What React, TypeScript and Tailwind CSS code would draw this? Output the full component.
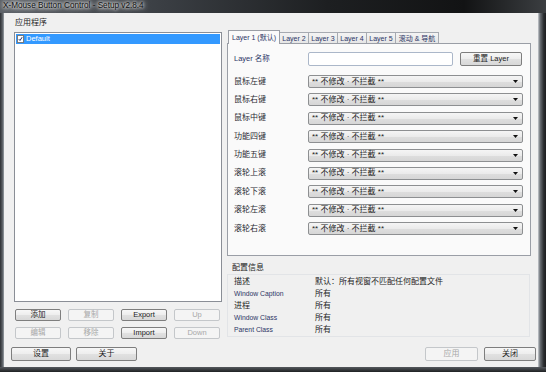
import clsx from "clsx";

const FONT = "font-['Liberation_Sans','Noto_Sans_CJK_SC',sans-serif]";

function Btn({ label, disabled, className }: { label: string; disabled?: boolean; className?: string }) {
  return (
    <div
      className={clsx(
        "flex items-center justify-center rounded-[2px] border leading-none",
        disabled
          ? "border-[#c4c7ca] bg-[#f4f4f4] text-[#a8a8a8]"
          : "border-[#7e7e7e] bg-[linear-gradient(#f7f7f7,#ededed_50%,#e1e1e1_51%,#d8d8d8)] text-[#1c1c1c]",
        className
      )}
    >
      {label}
    </div>
  );
}

function Combo() {
  return (
    <div className="flex h-[13px] w-[215px] items-center rounded-[2px] border border-[#8d8f91] bg-[linear-gradient(#f5f5f5,#ebebeb_50%,#dedede_51%,#d6d6d6)] pl-[3px] pr-[4px]">
      <span className="flex-1 text-[8px] leading-none text-[#222]">** 不修改 · 不拦截 **</span>
      <svg width="5" height="3" viewBox="0 0 5 3">
        <path d="M0 0h5L2.5 3z" fill="#111" />
      </svg>
    </div>
  );
}

const tabs = [
  { label: "Layer 2", w: "w-[30px]" },
  { label: "Layer 3", w: "w-[30px]" },
  { label: "Layer 4", w: "w-[30px]" },
  { label: "Layer 5", w: "w-[30px]" },
  { label: "滚动 & 导航", w: "w-[44px]" },
];

const buttons = ["鼠标左键", "鼠标右键", "鼠标中键", "功能四键", "功能五键", "滚轮上滚", "滚轮下滚", "滚轮左滚", "滚轮右滚"];

const info: [string, string, boolean][] = [
  ["描述", "默认：所有视窗不匹配任何配置文件", false],
  ["Window Caption", "所有", true],
  ["进程", "所有", false],
  ["Window Class", "所有", true],
  ["Parent Class", "所有", true],
];

export default function App() {
  return (
    <div className={clsx("flex h-[372px] w-[546px] flex-col overflow-hidden bg-[#2b2e31]", FONT)}>
      {/* title bar */}
      <div className="flex h-[13px] items-center bg-[linear-gradient(90deg,#5b6066,#3a3e43_30%,#1d1f21_60%,#121314_85%,#3b3e41)] pl-[3px]">
        <span className="text-[8.2px] leading-none text-[#111] [text-shadow:0_0_3px_#fff,0_0_5px_#fff,0_0_7px_#ddd]">
          X-Mouse Button Control - Setup v2.8.4
        </span>
      </div>

      <div className="flex flex-1">
        <div className="w-[4px] bg-[linear-gradient(90deg,#2c2f33,#5a5f64_60%,#9aa0a6)]" />

        {/* window body */}
        <div className="flex h-[354px] w-[534px] flex-col bg-[#f0f0f0]">
          <div className="flex h-[326px]">
            {/* left column */}
            <div className="ml-[10px] flex w-[208px] flex-col">
              <div className="mt-[5px] h-[10px] pl-[1px] text-[8px] leading-[10px] text-[#1e1e1e]">应用程序</div>
              <div className="mt-[4px] h-[270px] border border-[#8a8e96] bg-white">
                <div className="ml-[1px] mr-[1px] mt-[1px] flex h-[10px] items-center bg-[#3399ff]">
                  <div className="ml-[1px] flex h-[8px] w-[7px] items-center justify-center border border-[#7a7a7a] bg-white">
                    <svg width="6" height="6" viewBox="0 0 6 6">
                      <path d="M1 3.2 2.4 4.8 5 0.8" fill="none" stroke="#1f2d6b" strokeWidth="1.2" />
                    </svg>
                  </div>
                  <span className="ml-[2px] text-[7.5px] leading-none text-white">Default</span>
                </div>
              </div>
              <div className="mt-[7px] grid w-[206px] grid-cols-4 gap-x-[7px] gap-y-[6px] pl-[1px] text-[7.5px]">
                <Btn label="添加" className="h-[12px]" />
                <Btn label="复制" disabled className="h-[12px]" />
                <Btn label="Export" className="h-[12px]" />
                <Btn label="Up" disabled className="h-[12px]" />
                <Btn label="编辑" disabled className="h-[12px]" />
                <Btn label="移除" disabled className="h-[12px]" />
                <Btn label="Import" className="h-[12px]" />
                <Btn label="Down" disabled className="h-[12px]" />
              </div>
            </div>

            {/* right column */}
            <div className="ml-[5px] mt-[18px] flex w-[304px] flex-col">
              <div className="flex h-[12px] items-end pl-[1px] text-[7px] text-[#2c3566]">
                <div className="relative z-10 -mb-px flex h-[14px] w-[52px] items-center justify-center border border-b-0 border-[#9a9ea6] bg-[#fafafa] leading-none">
                  Layer 1 (默认)
                </div>
                {tabs.map((t) => (
                  <div
                    key={t.label}
                    className={clsx(
                      "-ml-px flex h-[11px] items-center justify-center border border-b-0 border-[#a6aab1] bg-[linear-gradient(#f4f4f4,#e6e6e6)] leading-none",
                      t.w
                    )}
                  >
                    {t.label}
                  </div>
                ))}
              </div>

              <div className="h-[213px] border border-[#9a9ea6] bg-[#fafafa] pl-[6px] pt-[8px]">
                <div className="flex h-[14px] items-center">
                  <div className="w-[74px] text-[7.5px] leading-none text-[#2c3566]">Layer 名称</div>
                  <div className="h-[14px] w-[145px] rounded-[2px] border border-[#abb7c9] bg-white" />
                  <Btn label="重置 Layer" className="ml-[7px] h-[14px] w-[62px] text-[7.5px]" />
                </div>
                <div className="mt-[9px] grid gap-y-[5.4px]">
                  {buttons.map((b) => (
                    <div key={b} className="flex h-[13px] items-center">
                      <div className="w-[74px] text-[8px] leading-none text-[#2a2a33]">{b}</div>
                      <Combo />
                    </div>
                  ))}
                </div>
              </div>

              <div className="mt-[7px] h-[10px] pl-[5px] text-[8px] leading-[10px] text-[#1e1e1e]">配置信息</div>
              <div className="mt-[1px] w-[303px] border border-[#e2e4e7] pl-[6px] pt-[1px]">
                {info.map(([k, v, latin]) => (
                  <div key={k} className="flex h-[12px] items-center">
                    <div className={clsx("w-[81px] leading-none", latin ? "text-[6.8px] text-[#2c3566]" : "text-[8px] text-[#1e1e1e]")}>{k}</div>
                    <div className="text-[8px] leading-none text-[#1e1e1e]">{v}</div>
                  </div>
                ))}
              </div>
            </div>
          </div>

          {/* bottom buttons */}
          <div className="mt-[8px] flex h-[14px] text-[8px]">
            <Btn label="设置" className="ml-[7px] w-[60px]" />
            <Btn label="关于" className="ml-[5px] w-[61px]" />
            <div className="flex-1" />
            <Btn label="应用" disabled className="w-[53px]" />
            <Btn label="关闭" className="ml-[6px] mr-[2px] w-[52px]" />
          </div>
        </div>

        <div className="w-[8px] bg-[linear-gradient(90deg,#c9cdd2,#6d7277_25%,#2c2f32_70%,#1c1d1f)]" />
      </div>

      <div className="h-[5px] bg-[linear-gradient(#55595e,#1f2123)]" />
    </div>
  );
}
